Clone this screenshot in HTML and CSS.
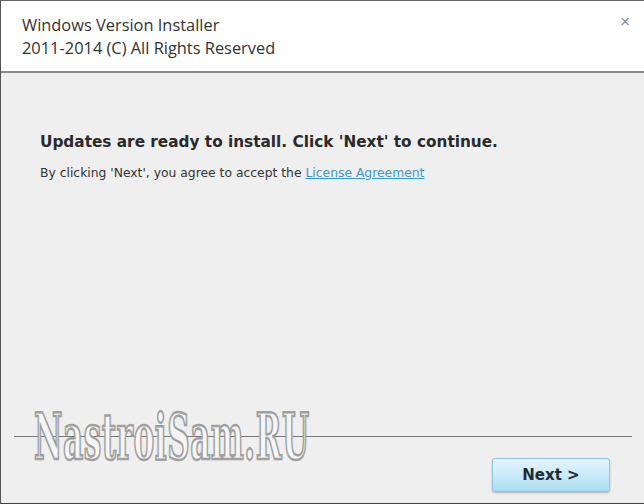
FILE: index.html
```html
<!DOCTYPE html>
<html>
<head>
<meta charset="utf-8">
<link rel="stylesheet" href="styles.css">
</head>
<body>
<div class="window">
  <div class="header">
    <div class="title">Windows Version Installer</div>
    <div class="title">2011-2014 (C) All Rights Reserved</div>
    <span class="close">×</span>
  </div>
  <div class="content">
    <h1 class="heading">Updates are ready to install. Click 'Next' to continue.</h1>
    <p class="note">By clicking 'Next', you agree to accept the <a class="link" href="#">License Agreement</a></p>
  </div>
  <div class="footer">
    <div class="sep"></div>
    <div class="actions">
      <button class="next">Next &gt;</button>
    </div>
  </div>
  <div class="watermark">NastroiSam.RU</div>
</div>
</body>
</html>
```
FILE: styles.css
```css
html, body {
  margin: 0;
  padding: 0;
  background: #efefef;
}
.window {
  position: relative;
  width: 644px;
  height: 504px;
  box-sizing: border-box;
  border-left: 1px solid #555;
  border-top: 1px solid #666;
  border-bottom: 1px solid #444;
  display: flex;
  flex-direction: column;
  background: #efefef;
  overflow: hidden;
}
.header {
  position: relative;
  height: 70px;
  background: #fff;
  border-bottom: 2px solid #8a8a8a;
  box-sizing: content-box;
  padding-left: 21px;
  display: flex;
  flex-direction: column;
  justify-content: center;
}
.title {
  font-family: "Open Sans", "Noto Sans", sans-serif;
  font-size: 16.4px;
  line-height: 23px;
  color: #333;
}
.close {
  position: absolute;
  right: 13px;
  top: 12px;
  font-family: "DejaVu Sans", sans-serif;
  font-size: 14px;
  color: #888;
}
.content {
  flex: 1;
  padding: 58px 0 0 39px;
}
.heading {
  margin: 0;
  font-family: "DejaVu Sans", Verdana, sans-serif;
  font-weight: bold;
  font-size: 15.3px;
  color: #2a2a2a;
  line-height: 22px;
}
.note {
  margin: 12px 0 0;
  font-family: "DejaVu Sans", Verdana, sans-serif;
  font-size: 12.35px;
  color: #333;
  line-height: 16px;
}
.link {
  color: #3a9ad0;
  text-decoration: underline;
}
.footer {
  display: flex;
  flex-direction: column;
}
.sep {
  margin: 0 12px 0 13px;
  height: 1px;
  background: #777;
}
.actions {
  display: flex;
  justify-content: flex-end;
  padding: 21px 34px 11px 0;
}
.next {
  width: 118px;
  height: 34px;
  border: 1px solid #8fc6df;
  border-radius: 3px;
  background: linear-gradient(#e4f5fd, #c9ebfa 50%, #a9dcf4);
  box-shadow: 0 1px 2px rgba(0,0,0,0.25);
  font-family: "DejaVu Sans", Verdana, sans-serif;
  font-weight: bold;
  font-size: 15px;
  color: #1f2c36;
}
.watermark {
  position: absolute;
  left: 33px;
  top: 398px;
  font-family: "DejaVu Serif Condensed", "DejaVu Serif", serif;
  font-weight: bold;
  font-size: 64px;
  line-height: 76px;
  color: #f6f6f6;
  -webkit-text-stroke: 2.5px #a0a0a0;
  transform-origin: left top;
  transform: scaleX(0.54);
  letter-spacing: 1px;
}
```
